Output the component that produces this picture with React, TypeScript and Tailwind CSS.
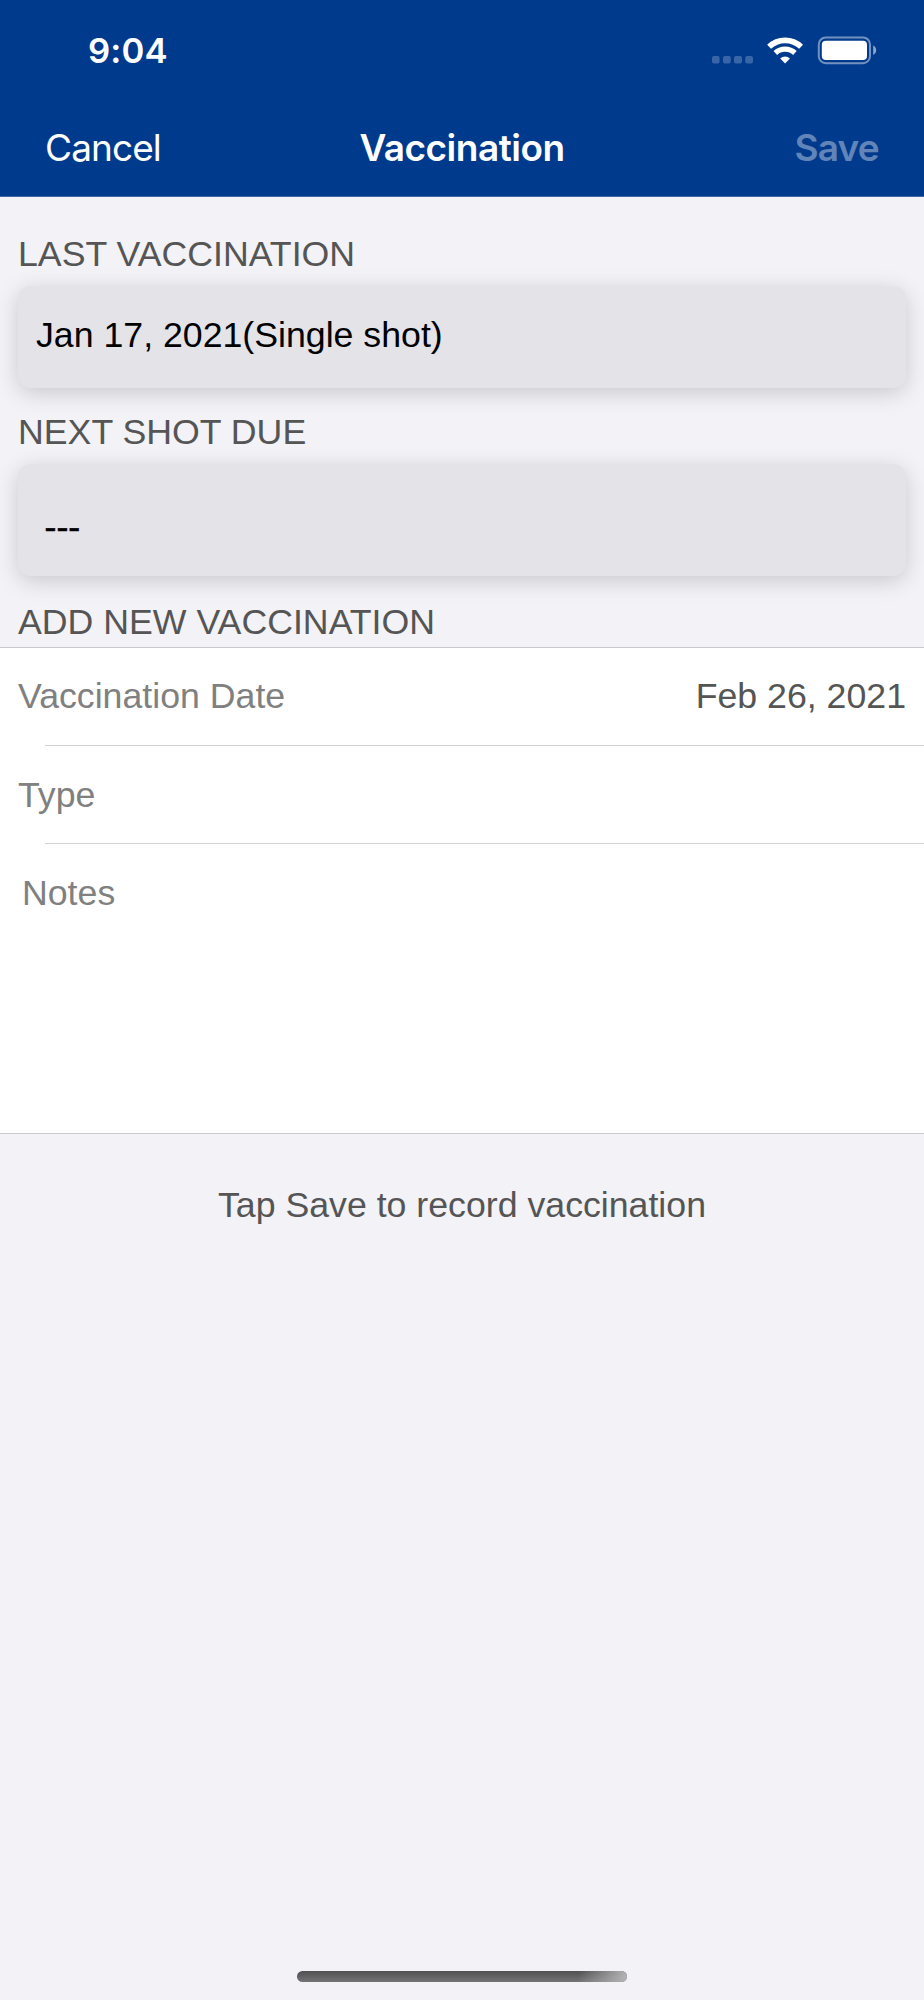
import type { ReactNode } from "react";

function StatusIcons() {
  return (
    <svg width="166" height="30" viewBox="0 0 166 30" fill="none" aria-hidden="true">
      <g fill="#ffffff" fillOpacity="0.22">
        <rect x="0" y="21" width="7.6" height="7.4" rx="2" />
        <rect x="11" y="21" width="7.8" height="7.4" rx="2" />
        <rect x="22" y="21" width="8" height="7.4" rx="2" />
        <rect x="33.2" y="21" width="7.8" height="7.4" rx="2" />
      </g>
      <g stroke="#ffffff" strokeWidth="5.6">
        <path d="M57.1 11.8A23.2 23.2 0 0 1 89.1 11.8" />
        <path d="M63.3 18A14.2 14.2 0 0 1 82.9 18" strokeWidth="5.2" />
      </g>
      <path d="M73.1 28.4L68.2 23.5A7.2 7.2 0 0 1 78 23.5Z" fill="#ffffff" />
      <rect x="106.8" y="2.4" width="51.2" height="25.8" rx="7" stroke="#ffffff" strokeOpacity="0.45" strokeWidth="2" />
      <rect x="109.8" y="5.8" width="45.2" height="19.2" rx="4" fill="#ffffff" />
      <path d="M161.2 10.6C165.2 12.2 165.2 18.4 161.2 20Z" fill="#ffffff" fillOpacity="0.55" />
    </svg>
  );
}

function SectionTitle({ children }: { children: ReactNode }) {
  return <h2 className="h-10 pl-[18px] leading-10 text-[#555555]">{children}</h2>;
}

const cardShadow = "shadow-[0_5px_22px_rgba(0,0,0,0.17)]";

export default function App() {
  return (
    <div className="flex h-[2000px] w-[924px] flex-col overflow-hidden bg-[#f2f2f7] font-['Liberation_Sans',Arial,sans-serif] text-[35.7px]">
      <header className="h-[197px] shrink-0 border-b border-[#4069a5] bg-[#003a8d] font-['Inter',sans-serif] text-white">
        <div className="flex h-[100px] items-start justify-between pt-[35px] pr-[46px] pl-[88px]">
          <span className="-mt-px text-[34.7px] leading-[32px] font-semibold tracking-[0.1px]">9:04</span>
          <StatusIcons />
        </div>
        <div className="grid grid-cols-3 items-center px-[45px] text-[37px] leading-[96px]">
          <button className="text-left leading-[96px] tracking-[-0.9px]">Cancel</button>
          <h1 className="text-center font-semibold tracking-[-0.5px]">Vaccination</h1>
          <button className="text-right leading-[96px] font-semibold tracking-[-0.75px] text-[#6185b9]">Save</button>
        </div>
      </header>

      <main className="flex flex-col pt-[37px]">
        <SectionTitle>LAST VACCINATION</SectionTitle>
        <section className={`mx-[18px] mt-3 h-[102px] rounded-[13px] bg-[#e4e3e8] pt-[29px] pl-[18px] leading-10 text-black ${cardShadow}`}>
          Jan 17, 2021(Single shot)
        </section>

        <div className="mt-6">
          <SectionTitle>NEXT SHOT DUE</SectionTitle>
        </div>
        <section className={`mx-[18px] mt-3 h-[112px] rounded-[13px] bg-[#e4e3e8] pt-[43px] pl-[26.5px] leading-10 text-black ${cardShadow}`}>
          <span className="[-webkit-text-stroke:0.6px_#000000]">---</span>
        </section>

        <div className="mt-[26px]">
          <SectionTitle>ADD NEW VACCINATION</SectionTitle>
        </div>
        <section className="mt-[5px] h-[487px] border-y border-[#c9c9cc] bg-white leading-10 text-[#808080]">
          <div className="flex h-[97px] justify-between px-[18px] pt-7">
            <span>Vaccination Date</span>
            <span className="text-[#555555]">Feb 26, 2021</span>
          </div>
          <div className="ml-[45px] h-px bg-[#d3d3d5]" />
          <div className="h-[97px] px-[18px] pt-[29px]">Type</div>
          <div className="ml-[45px] h-px bg-[#d3d3d5]" />
          <div className="px-[22px] pt-[29px]">Notes</div>
        </section>
        <p className="mt-[51px] text-center leading-10 text-[#555555]">Tap Save to record vaccination</p>
      </main>

      <footer className="mt-auto flex justify-center pb-[18px]">
        <div className="h-[11px] w-[330px] overflow-hidden rounded-full bg-linear-to-b from-[#505053] to-[#747476]">
          <div className="ml-auto h-full w-12 bg-linear-100 from-transparent to-[#b5b5b8]" />
        </div>
      </footer>
    </div>
  );
}
